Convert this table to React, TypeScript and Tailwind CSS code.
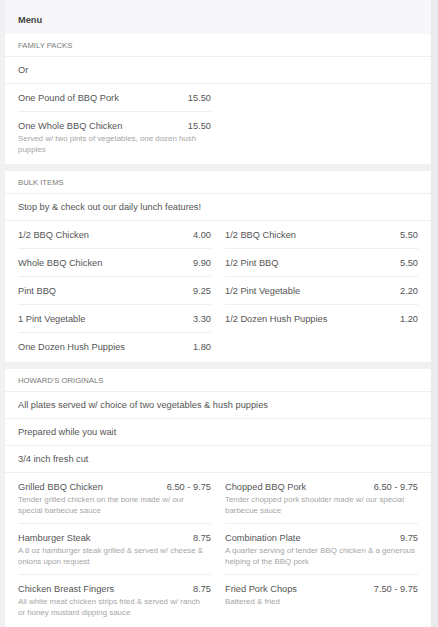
import React from "react";

interface MenuItem {
  name: string;
  price?: string;
  // lines of the description, broken as on the printed menu
  description?: string[];
}

interface MenuSection {
  title: string;
  notes: string[];
  items: MenuItem[];
}

const sections: MenuSection[] = [
  {
    title: "Family Packs",
    notes: ["Or"],
    items: [
      { name: "One Pound of BBQ Pork", price: "15.50" },
      { name: "" },
      {
        name: "One Whole BBQ Chicken",
        price: "15.50",
        description: ["Served w/ two pints of vegetables, one dozen hush", "puppies"],
      },
    ],
  },
  {
    title: "Bulk Items",
    notes: ["Stop by & check out our daily lunch features!"],
    items: [
      { name: "1/2 BBQ Chicken", price: "4.00" },
      { name: "1/2 BBQ Chicken", price: "5.50" },
      { name: "Whole BBQ Chicken", price: "9.90" },
      { name: "1/2 Pint BBQ", price: "5.50" },
      { name: "Pint BBQ", price: "9.25" },
      { name: "1/2 Pint Vegetable", price: "2.20" },
      { name: "1 Pint Vegetable", price: "3.30" },
      { name: "1/2 Dozen Hush Puppies", price: "1.20" },
      { name: "One Dozen Hush Puppies", price: "1.80" },
    ],
  },
  {
    title: "Howard's Originals",
    notes: [
      "All plates served w/ choice of two vegetables & hush puppies",
      "Prepared while you wait",
      "3/4 inch fresh cut",
    ],
    items: [
      {
        name: "Grilled BBQ Chicken",
        price: "6.50 - 9.75",
        description: ["Tender grilled chicken on the bone made w/ our", "special barbecue sauce"],
      },
      {
        name: "Chopped BBQ Pork",
        price: "6.50 - 9.75",
        description: ["Tender chopped pork shoulder made w/ our special", "barbecue sauce"],
      },
      {
        name: "Hamburger Steak",
        price: "8.75",
        description: ["A 8 oz hamburger steak grilled & served w/ cheese &", "onions upon request"],
      },
      {
        name: "Combination Plate",
        price: "9.75",
        description: ["A quarter serving of tender BBQ chicken & a generous", "helping of the BBQ pork"],
      },
      {
        name: "Chicken Breast Fingers",
        price: "8.75",
        description: ["All white meat chicken strips fried & served w/ ranch", "or honey mustard dipping sauce"],
      },
      { name: "Fried Pork Chops", price: "7.50 - 9.75", description: ["Battered & fried"] },
    ],
  },
];

function ItemCell({ item, first }: { item: MenuItem; first: boolean }) {
  if (!item.name) {
    return <div />;
  }
  return (
    <div className={`pt-[8px] pb-[7px] ${first ? "" : "border-t border-[#efeff1]"}`}>
      <div className="flex items-baseline justify-between gap-2 text-[9.25px] leading-[12px] text-[#555]">
        <span>{item.name}</span>
        <span>{item.price}</span>
      </div>
      {item.description ? (
        <div className="mt-[1px] text-[7.9px] leading-[11px] text-[#a6a6a6]">
          {item.description.map((line) => (
            <p key={line} className="whitespace-nowrap">
              {line}
            </p>
          ))}
        </div>
      ) : null}
    </div>
  );
}

function Section({ section }: { section: MenuSection }) {
  return (
    <section className="bg-white pb-[2px]">
      <div className="flex h-[23px] items-center border-b border-[#efeff1] px-[13px] pt-[2px] text-[7.7px] uppercase text-[#7a7a7a]">
        {section.title}
      </div>
      {section.notes.map((note) => (
        <div
          key={note}
          className="flex h-[27px] items-center border-b border-[#efeff1] px-[13px] pt-[2px] text-[9.25px] text-[#555]"
        >
          {note}
        </div>
      ))}
      <div className="grid grid-cols-2 gap-x-[14px] px-[13px]">
        {section.items.map((item, index) => (
          <ItemCell key={`${item.name}-${index}`} item={item} first={index < 2} />
        ))}
      </div>
    </section>
  );
}

export default function App() {
  return (
    <div
      className="flex min-h-[627px] w-full bg-[#f1f1f4]"
      style={{ fontFamily: '"Liberation Sans", Arial, sans-serif' }}
    >
      <div className="w-[5px] shrink-0" />
      <main className="flex w-[426px] shrink-0 flex-col gap-[7px]">
        <div className="-mb-[7px] h-[34px] bg-[#f7f7fa] px-[13px] pt-[14px] text-[9.25px] font-bold leading-[12px] text-[#444]">
          Menu
        </div>
        {sections.map((section) => (
          <Section key={section.title} section={section} />
        ))}
      </main>
      <div className="flex-1 bg-[#eaeaef]" />
    </div>
  );
}
